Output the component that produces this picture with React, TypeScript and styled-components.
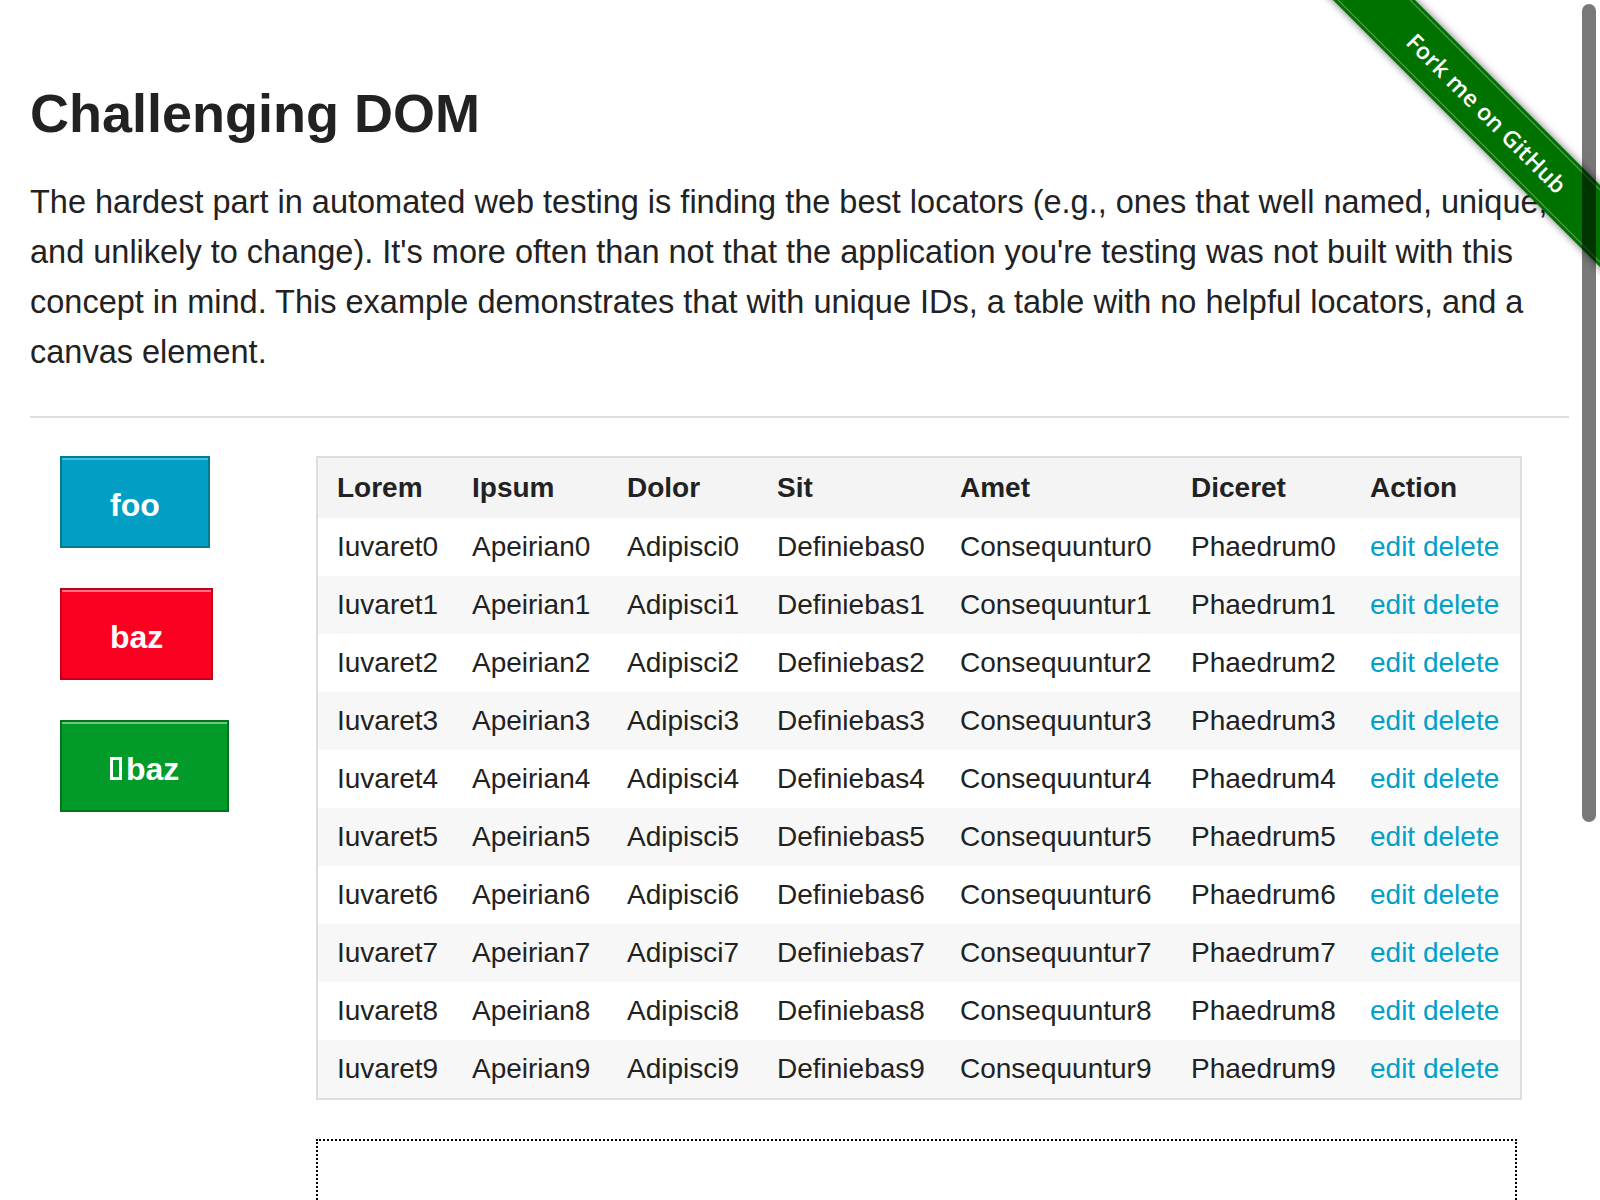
import React from 'react';
import styled, { createGlobalStyle, css } from 'styled-components';

const GlobalStyle = createGlobalStyle`
  html, body {
    margin: 0;
    padding: 0;
    overflow: hidden;
    background: #fff;
  }
  body {
    font-family: 'Liberation Sans', Helvetica, Arial, sans-serif;
    color: #222;
  }
`;

const rows = Array.from({ length: 10 }, (_, i) => i);
const headers = ['Lorem', 'Ipsum', 'Dolor', 'Sit', 'Amet', 'Diceret', 'Action'];
const colWidths = [135, 155, 150, 183, 231, 179, 169];

type Variant = 'primary' | 'alert' | 'success';

const palette: Record<Variant, { bg: string; border: string; shine: string }> = {
  primary: { bg: '#029ec4', border: '#017a96', shine: '#3fc3de' },
  alert: { bg: '#fc0021', border: '#c20019', shine: '#ff7686' },
  success: { bg: '#029a29', border: '#02731f', shine: '#72c57f' },
};

const App = () => {
  return (
    <>
      <GlobalStyle />
      <Page>
        <Title>Challenging DOM</Title>
        <Intro>
          The hardest part in automated web testing is finding the best locators (e.g., ones that
          well named, unique, and unlikely to change). It's more often than not that the
          application you're testing was not built with this concept in mind. This example
          demonstrates that with unique IDs, a table with no helpful locators, and a canvas
          element.
        </Intro>
        <Divider />
        <Row>
          <Side>
            <Button $variant="primary">foo</Button>
            <Button $variant="alert">baz</Button>
            <Button $variant="success">
              <Tofu />
              baz
            </Button>
          </Side>
          <Main>
            <Table>
              <colgroup>
                {colWidths.map((w, i) => (
                  <col key={i} style={{ width: w }} />
                ))}
              </colgroup>
              <thead>
                <tr>
                  {headers.map((h) => (
                    <Th key={h}>{h}</Th>
                  ))}
                </tr>
              </thead>
              <tbody>
                {rows.map((i) => (
                  <Tr key={i} $striped={i % 2 === 1}>
                    <Td>Iuvaret{i}</Td>
                    <Td>Apeirian{i}</Td>
                    <Td>Adipisci{i}</Td>
                    <Td>Definiebas{i}</Td>
                    <Td>Consequuntur{i}</Td>
                    <Td>Phaedrum{i}</Td>
                    <Td>
                      <Link href="#edit">edit</Link> <Link href="#delete">delete</Link>
                    </Td>
                  </Tr>
                ))}
              </tbody>
            </Table>
            <Canvas />
          </Main>
        </Row>
      </Page>
      <RibbonWrap>
        <Ribbon>
          <RibbonText>Fork me on GitHub</RibbonText>
        </Ribbon>
      </RibbonWrap>
      <ScrollThumb />
    </>
  );
};

export default App;

const Page = styled.div`
  width: 1539px;
  padding: 0 31px 0 30px;
`;

const Title = styled.h1`
  margin: 86px 0 0;
  font-size: 54px;
  line-height: 54px;
  font-weight: 700;
  color: #222;
`;

const Intro = styled.p`
  margin: 37px 0 0;
  font-size: 32.5px;
  line-height: 50px;
  color: #222;
`;

const Divider = styled.hr`
  margin: 39px 0 0;
  height: 2px;
  border: 0;
  background: #ddd;
`;

const Row = styled.div`
  display: grid;
  grid-template-columns: 256px 1fr;
  margin-top: 38px;
`;

const Side = styled.div`
  padding: 0 30px;
  display: flex;
  flex-direction: column;
  align-items: flex-start;
  gap: 40px;
`;

const Button = styled.a<{ $variant: Variant }>`
  display: inline-block;
  box-sizing: border-box;
  height: 92px;
  padding: 6px 48px 0;
  line-height: 82px;
  font-size: 32px;
  font-weight: 700;
  color: #fff;
  text-decoration: none;
  ${({ $variant }) => css`
    background: ${palette[$variant].bg};
    border: 2px solid ${palette[$variant].border};
    box-shadow: inset 0 2px 0 ${palette[$variant].shine};
  `}
`;

const Tofu = styled.span`
  display: inline-block;
  box-sizing: border-box;
  width: 12px;
  height: 23px;
  margin-right: 4px;
  border: 3px solid #fff;
`;

const Main = styled.div`
  padding: 0 30px;
`;

const Table = styled.table`
  width: 1206px;
  table-layout: fixed;
  border-collapse: separate;
  border-spacing: 0;
  border: 2px solid #ddd;
`;

const Th = styled.th`
  height: 60px;
  padding: 0 0 0 19px;
  background: #f4f4f4;
  text-align: left;
  font-size: 28px;
  font-weight: 700;
  color: #222;
  white-space: nowrap;
`;

const Tr = styled.tr<{ $striped: boolean }>`
  background: ${({ $striped }) => ($striped ? '#f7f7f7' : '#fff')};
`;

const Td = styled.td`
  height: 58px;
  padding: 0 0 0 19px;
  font-size: 28px;
  color: #222;
  white-space: nowrap;
`;

const Link = styled.a`
  color: #00a0c8;
  text-decoration: none;
`;

const Canvas = styled.div`
  width: 1197px;
  height: 400px;
  margin-top: 39px;
  border: 2px dotted #000;
`;

const RibbonWrap = styled.div`
  position: absolute;
  top: 0;
  right: 0;
  width: 300px;
  height: 300px;
  overflow: hidden;
`;

const Ribbon = styled.div`
  position: absolute;
  left: -33px;
  top: 84px;
  width: 440px;
  height: 58px;
  box-sizing: border-box;
  padding: 3px 0;
  background: #007200;
  transform: rotate(45deg);
  box-shadow: 0 0 8px rgba(0, 0, 0, 0.55);
`;

const RibbonText = styled.div`
  height: 100%;
  box-sizing: border-box;
  border-top: 1px solid rgba(255, 255, 255, 0.35);
  border-bottom: 1px solid rgba(255, 255, 255, 0.35);
  display: flex;
  align-items: center;
  justify-content: center;
  font-family: 'Open Sans', 'Liberation Sans', sans-serif;
  font-size: 23px;
  font-weight: 600;
  color: #fff;
  letter-spacing: 0.3px;
`;

const ScrollThumb = styled.div`
  position: fixed;
  top: 4px;
  right: 4px;
  width: 14px;
  height: 818px;
  border-radius: 7px;
  background: rgba(0, 0, 0, 0.53);
`;
